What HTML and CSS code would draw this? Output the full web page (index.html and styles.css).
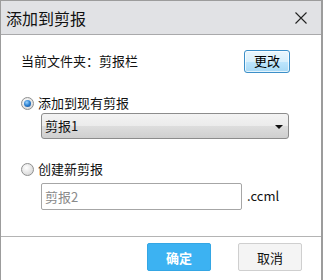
FILE: index.html
```html
<!DOCTYPE html>
<html lang="zh-CN">
<head>
  <meta charset="UTF-8" />
  <title>添加到剪报</title>
  <link rel="stylesheet" href="styles.css">
</head>
<body>
  <div class="dialog">
    <header class="dialog-title">
      <span>添加到剪报</span>
      <svg class="close" width="12" height="12" viewBox="0 0 12 12">
        <path d="M0.5 0.5 L11.5 11.5 M11.5 0.5 L0.5 11.5" stroke="#222" stroke-width="1.1" fill="none"/>
      </svg>
    </header>
    <main class="dialog-body">
      <div class="row folder-row">
        <span>当前文件夹：剪报栏</span>
        <button class="btn-change">更改</button>
      </div>
      <label class="row radio-row first">
        <span class="radio checked"></span>
        <span>添加到现有剪报</span>
      </label>
      <div class="select">
        <span>剪报1</span>
        <span class="arrow"></span>
      </div>
      <label class="row radio-row second">
        <span class="radio"></span>
        <span>创建新剪报</span>
      </label>
      <div class="new-row">
        <input class="name-input" type="text" placeholder="剪报2">
        <span class="ext">.ccml</span>
      </div>
    </main>
    <footer class="dialog-footer">
      <button class="btn btn-ok">确定</button>
      <button class="btn btn-cancel">取消</button>
    </footer>
  </div>
</body>
</html>
```

FILE: styles.css
```css
*,*::before,*::after{box-sizing:border-box;margin:0;padding:0;}
body{
  font-family: "Noto Sans CJK SC", "Noto Sans", sans-serif;
  font-size:13px;
  color:#111;
  background:#fff;
  overflow:hidden;
}
.dialog{
  width:323px;
  height:280px;
  border:1px solid #9c9c9c;
  border-right-width:2px;
  border-bottom:none;
  background:#fff;
  overflow:hidden;
}
.dialog-title{
  height:34px;
  background:#e1e2e5;
  border-bottom:1px solid #a9a9ab;
  display:flex;align-items:center;justify-content:space-between;
  padding:0 14px 0 5px;
  font-size:16px;
  line-height:20px;
  color:#111;
}
.dialog-title .close{display:block;margin-top:1px;}
.dialog-body{
  padding:15px 0 0 20px;
  height:202px;
  border-bottom:1px solid #b4b4b4;
}
.row{display:flex;align-items:center;line-height:16px;}
.folder-row{
  height:22px;
  justify-content:space-between;
  padding-right:31px;
}
.btn-change{
  width:46px;height:23px;
  font:inherit;font-size:13px;color:#000;
  border:1px solid #3c8fc8;
  border-radius:3px;
  background:linear-gradient(#eaf6fd 0%, #d9f0fc 50%, #bee6fd 51%, #a7d9f5 100%);
  box-shadow:inset 0 0 0 1px rgba(255,255,255,.7);
}
.radio-row{height:16px;gap:4px;}
.radio-row.first{margin-top:23px;}
.radio-row.second{margin-top:22px;}
.radio{
  width:13px;height:13px;border-radius:50%;
  border:1px solid #8e8f8f;
  background:radial-gradient(circle at 40% 35%, #fff 0%, #e6e6e6 50%, #cfcfcf 100%);
  display:flex;align-items:center;justify-content:center;
}
.radio.checked::after{
  content:"";width:7px;height:7px;border-radius:50%;
  background:radial-gradient(circle at 40% 35%, #9ad3ff 0%, #2a7fd0 50%, #14468c 100%);
}
.select{
  margin:2px 0 0 20px;
  width:248px;height:26px;
  border:1px solid #8c8c8c;
  border-radius:3px;
  background:linear-gradient(#f3f3f3 0%, #ebebeb 50%, #dddddd 51%, #cfcfcf 100%);
  display:flex;align-items:center;justify-content:space-between;
  padding:0 5px 0 3px;
  line-height:16px;
}
.select .arrow{
  width:0;height:0;
  border-left:4px solid transparent;
  border-right:4px solid transparent;
  border-top:4px solid #111;
  margin-top:1px;
}
.new-row{
  margin:6px 0 0 20px;
  display:flex;align-items:center;gap:5px;
}
.name-input{
  width:201px;height:27px;
  border:1px solid #a6a6a6;
  border-radius:2px;
  padding:0 3px;
  font:inherit;font-size:13px;
}
.name-input::placeholder{color:#8a8a8a;}
.ext{margin-top:-3px;}
.dialog-footer{
  display:flex;justify-content:flex-end;gap:27px;
  padding:6px 19px 0 0;
}
.btn{
  width:64px;height:28px;
  font:inherit;font-size:13px;
  border-radius:2px;
}
.btn-ok{
  background:#3cb2f2;
  border:1px solid #34a6e4;
  color:#fff;
  font-weight:bold;
}
.btn-cancel{
  background:#f4f4f4;
  border:1px solid #cfcfcf;
  color:#111;
}
```
